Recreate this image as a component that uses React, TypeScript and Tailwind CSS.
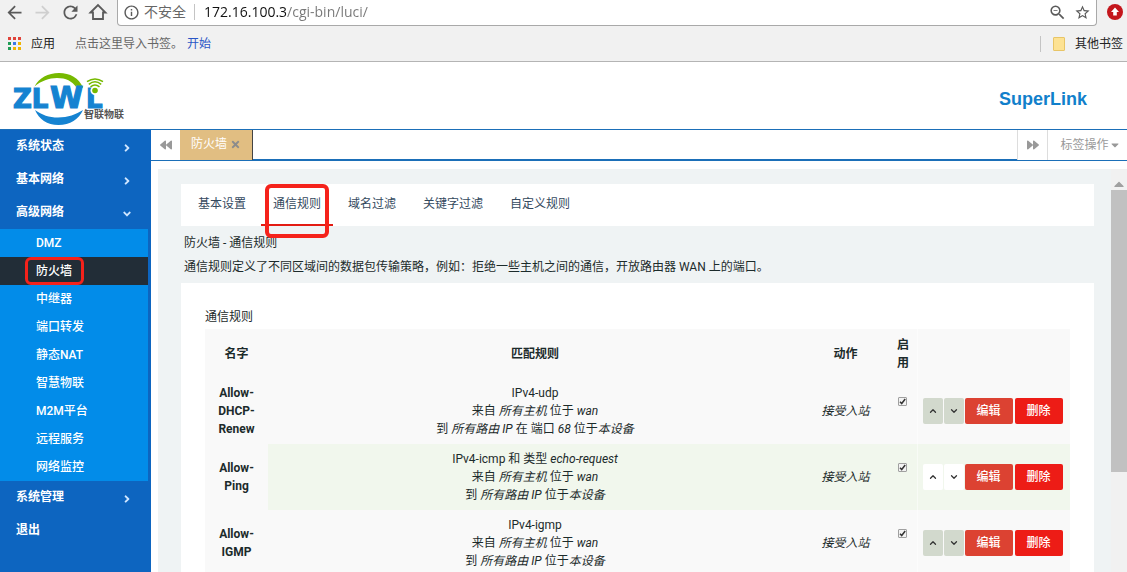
import type { ReactNode } from "react";
import clsx from "clsx";
import {
    FaAngleDown,
    FaAngleRight,
    FaBackward,
    FaCaretDown,
    FaCaretUp,
    FaForward,
    FaTimes,
} from "react-icons/fa";
import {
    MdArrowBack,
    MdArrowForward,
    MdInfoOutline,
    MdRefresh,
    MdStarBorder,
    MdZoomOut,
} from "react-icons/md";
import { ChevronDown, ChevronUp } from "lucide-react";

interface MenuItem {
    name: string;
    open?: boolean;
    arrow?: boolean;
    children?: string[];
}

interface Rule {
    name: string;
    match: ReactNode;
    source: ReactNode;
    target: ReactNode;
}

const menu: MenuItem[] = [
    { name: "系统状态", arrow: true },
    { name: "基本网络", arrow: true },
    {
        name: "高级网络",
        arrow: true,
        open: true,
        children: ["DMZ", "防火墙", "中继器", "端口转发", "静态NAT", "智慧物联", "M2M平台", "远程服务", "网络监控"],
    },
    { name: "系统管理", arrow: true },
    { name: "退出" },
];

const tabs = ["基本设置", "通信规则", "域名过滤", "关键字过滤", "自定义规则"];

const fromWan = <>来自 <i>所有主机</i> 位于 <i>wan</i></>;
const toDevice = <>到 <i>所有路由 IP</i> 位于<i>本设备</i></>;

const rules: Rule[] = [
    {
        name: "Allow-DHCP-Renew",
        match: "IPv4-udp",
        source: fromWan,
        target: <>到 <i>所有路由 IP</i> 在 端口 <i>68</i> 位于<i>本设备</i></>,
    },
    {
        name: "Allow-Ping",
        match: <>IPv4-icmp 和 类型 <i>echo-request</i></>,
        source: fromWan,
        target: toDevice,
    },
    { name: "Allow-IGMP", match: "IPv4-igmp", source: fromWan, target: toDevice },
];

const appDots = [
    "bg-[#e0443a]", "bg-[#e0443a]", "bg-[#e0443a]",
    "bg-[#1f9d55]", "bg-[#3b78e7]", "bg-[#f0b400]",
    "bg-[#1f9d55]", "bg-[#f0b400]", "bg-[#f0b400]",
];

function BrowserBar() {
    return (
        <div className="shrink-0 border-b border-[#b4b4b4] bg-[#f1f1f1] font-['Open_Sans','Noto_Sans_CJK_SC',sans-serif]">
            <div className="flex h-[26px] items-stretch">
                <div className="flex w-[117px] shrink-0 items-center gap-[7px] pb-[2px] pl-1 text-[21px] text-[#5a5a5a]">
                    <button aria-label="后退"><MdArrowBack /></button>
                    <button aria-label="前进" className="text-[#cfcfcf]"><MdArrowForward /></button>
                    <button aria-label="刷新"><MdRefresh /></button>
                    <button aria-label="主页">
                        <svg width="20" height="20" viewBox="0 0 20 20" fill="none" stroke="currentColor" strokeWidth="1.8">
                            <path d="M2.500 10.500 10 3l7.500 7.500H15V17H5v-6.500z" />
                        </svg>
                    </button>
                </div>
                <div className="flex min-w-0 flex-1 items-center rounded-b-sm border-x border-b border-[#a9a9a9] bg-white px-[5px] pb-px text-sm">
                    <MdInfoOutline className="shrink-0 text-[17px] text-[#5a5a5a]" />
                    <span className="ml-1 shrink-0 text-[#666]">不安全</span>
                    <span className="mx-2 h-4 w-px shrink-0 bg-[#c4c4c4]" />
                    <input
                        aria-label="地址"
                        defaultValue="172.16.100.3/cgi-bin/luci/"
                        className="min-w-0 flex-1 bg-[linear-gradient(90deg,#111_83px,#777_83px)] bg-clip-text pl-px text-transparent outline-none"
                    />
                    <button aria-label="缩小" className="text-[19px] text-[#5a5a5a]"><MdZoomOut /></button>
                    <button aria-label="收藏" className="ml-[7px] text-[17px] text-[#5a5a5a]"><MdStarBorder /></button>
                </div>
                <button aria-label="更新" className="flex w-[30px] shrink-0 items-center justify-end pr-1 pb-[2px]">
                    <svg width="16" height="16" viewBox="0 0 16 16">
                        <circle cx="8" cy="8" r="8" fill="#c4161c" />
                        <path d="M8 3.5 12 8H9.8v3.6H6.2V8H4z" fill="#fff" />
                    </svg>
                </button>
            </div>
            <div className="flex h-[35px] items-center px-2 text-xs">
                <a href="#apps" className="flex items-center gap-[10px] text-[#222]">
                    <span className="grid grid-cols-3 gap-[2px]">
                        {appDots.map((dot, index) => (
                            <span key={index} className={clsx("size-[3px]", dot)} />
                        ))}
                    </span>
                    应用
                </a>
                <span className="ml-5 text-[#666]">点击这里导入书签。</span>
                <a href="#import" className="ml-1 text-[#2a56c6]">开始</a>
                <span className="ml-auto h-4 w-px bg-[#c4c4c4]" />
                <a href="#other" className="ml-3 -mr-1 flex items-center gap-[10px] text-[#222]">
                    <span className="h-[14px] w-3 rounded-[1px] border border-[#e8c567] bg-[#fde293]" />
                    其他书签
                </a>
            </div>
        </div>
    );
}

function Logo() {
    return (
        <svg className="mt-[6px]" width="112" height="54" viewBox="13 72 112 54" role="img" aria-label="智联物联">
            <path d="M34.500 86.500C39 78 48 73 59 73c11 0 20 5 24 14.500h-6.500C72 81 66 78 57 78c-8 0-16 3-22.500 8.500z" fill="#76b900" />
            <path d="M35 110c7 5 14 7.500 23 7.500 10 0 18-3 25-7.500-4 9-13 15-24.500 15C47 125 39 119 35 110z" fill="#1583d1" />
            <g fontFamily="DejaVu Sans" fontWeight="bold" fill="#1583d1" stroke="#1583d1" strokeWidth="1.200">
                <text x="13" y="108" fontSize="26">ZL</text>
                <text x="50" y="108" fontSize="30">W</text>
                <text x="86" y="108" fontSize="26">L</text>
            </g>
            <circle cx="95" cy="90.500" r="4.500" fill="#fff" />
            <circle cx="95" cy="90.500" r="2.800" fill="#76b900" />
            <g fill="none" stroke="#76b900" strokeWidth="1.500">
                <path d="M90.500 86.800q4.500-3.600 9 0" />
                <path d="M88.800 84.300q6.200-5 12.400 0" />
                <path d="M87 81.700q8-5.500 16 0" />
            </g>
            <text x="84" y="118" fontFamily="Noto Sans CJK SC" fontWeight="bold" fontSize="10" fill="#555">智联物联</text>
        </svg>
    );
}

function Sidebar() {
    return (
        <nav className="w-[151px] shrink-0 bg-[#0d65c0] text-xs text-white">
            {menu.map((item) => (
                <div key={item.name}>
                    <a href="#menu" className="flex h-[33px] items-center justify-between pr-[18px] pb-[2px] pl-4 font-bold">
                        {item.name}
                        {item.arrow && (item.open ? <FaAngleDown className="mt-1 text-[#cfe6ff]" /> : <FaAngleRight className="mt-1 text-[#cfe6ff]" />)}
                    </a>
                    {item.children && (
                        <ul className="mr-[3px] bg-[#028ce9] font-medium">
                            {item.children.map((child) => (
                                <li key={child} className={clsx("relative", child === "防火墙" && "bg-[#222d37]")}>
                                    <a href="#page" className="flex h-7 items-center pl-9">{child}</a>
                                    {child === "防火墙" && (
                                        <span className="pointer-events-none absolute inset-y-0 left-[25px] w-[59px] rounded-md border-3 border-[#f5221b]" />
                                    )}
                                </li>
                            ))}
                        </ul>
                    )}
                </div>
            ))}
        </nav>
    );
}

function PageTabs() {
    return (
        <div className="flex h-[31px] shrink-0 border-b border-[#1b6fb8] text-xs text-[#999]">
            <button aria-label="向左" className="flex w-[29px] items-center justify-center"><FaBackward /></button>
            <div className="flex w-[73px] items-center justify-center gap-[3px] border-r border-[#444] bg-[#e1be82] pb-[2px] text-white">
                <a href="#firewall">防火墙</a>
                <button aria-label="关闭" className="text-[11px] text-[#8c8c8c]"><FaTimes /></button>
            </div>
            <div className="flex-1 border-b border-[#1b6fb8]" />
            <button aria-label="向右" className="flex w-[30px] items-center justify-center border-l border-[#ddd]"><FaForward /></button>
            <button className="flex w-20 items-center justify-center border-l border-[#ddd] pl-[6px]">
                标签操作<FaCaretDown />
            </button>
        </div>
    );
}

function SectionTabs() {
    return (
        <div className="flex gap-[3px] bg-white px-[5px] text-[#34495e]">
            {tabs.map((tab) => {
                const active = tab === "通信规则";
                return (
                    <a
                        key={tab}
                        href="#tab"
                        className={clsx("relative flex h-[42px] items-center border-b-2 px-3", active ? "border-[#e31b12]" : "border-transparent")}
                    >
                        {tab}
                        {active && (
                            <span className="pointer-events-none absolute top-0 left-1 h-[54px] w-16 rounded-md border-4 border-[#f5221b]" />
                        )}
                    </a>
                );
            })}
        </div>
    );
}

function RuleRow({ rule, even }: { rule: Rule; even: boolean }) {
    const arrow = clsx("flex h-[26px] w-5 items-center justify-center rounded-xs text-[#333]", even ? "bg-white" : "bg-[#d2d9cd]");
    return (
        <tr className={even ? "bg-[#f1f7ed]" : "bg-[#f9f9f9]"}>
            <th scope="row" className="bg-[#f9f9f9] px-[6px] py-[6px] font-bold">{rule.name}</th>
            <td className="py-[6px]">
                <p>{rule.match}</p>
                <p>{rule.source}</p>
                <p>{rule.target}</p>
            </td>
            <td><i>接受入站</i></td>
            <td>
                <label className="relative mx-auto mb-5 block size-[9px]">
                    <input
                        type="checkbox"
                        defaultChecked
                        aria-label={`启用 ${rule.name}`}
                        className="peer block size-[9px] appearance-none rounded-[1px] border border-[#a0a0a0] bg-[#f3f3f3]"
                    />
                    <svg viewBox="0 0 9 9" className="pointer-events-none absolute inset-0 hidden size-[9px] peer-checked:block" fill="none" stroke="#333" strokeWidth="1.500">
                        <path d="m2 4.700 1.700 1.800L7.200 2" />
                    </svg>
                </label>
            </td>
            <td className="border-l border-white/50">
                <div className="flex pl-[5px] text-white">
                    <button aria-label="上移" className={arrow}><ChevronUp size={10} strokeWidth={3} /></button>
                    <button aria-label="下移" className={clsx(arrow, "ml-px")}><ChevronDown size={10} strokeWidth={3} /></button>
                    <button className="ml-px h-[26px] w-12 rounded-xs bg-[#dc4232] font-medium">编辑</button>
                    <button className="ml-[2px] h-[26px] w-12 rounded-xs bg-[#ed1c16] font-medium">删除</button>
                </div>
            </td>
        </tr>
    );
}

function RuleTable() {
    return (
        <table className="w-full table-fixed text-center leading-[18px]">
            <colgroup>
                <col className="w-[63px]" />
                <col />
                <col className="w-[87px]" />
                <col className="w-7" />
                <col className="w-[153px]" />
            </colgroup>
            <thead>
                <tr className="h-[49px] bg-[#f9f9f9]">
                    <th>名字</th>
                    <th>匹配规则</th>
                    <th>动作</th>
                    <th className="px-2">启用</th>
                    <td className="border-l border-white/50" />
                </tr>
            </thead>
            <tbody>
                {rules.map((rule, index) => (
                    <RuleRow key={rule.name} rule={rule} even={index % 2 === 1} />
                ))}
            </tbody>
        </table>
    );
}

function ScrollBar() {
    return (
        <div className="w-4 shrink-0 bg-[#f1f1f1]">
            <button aria-label="向上滚动" className="flex h-[21px] w-full items-center justify-center text-base text-[#a0a0a0]">
                <FaCaretUp className="mt-2" />
            </button>
            <div className="h-[70%] bg-[#c1c1c1]" />
        </div>
    );
}

export default function App() {
    return (
        <div className="flex h-screen flex-col overflow-hidden bg-white font-[Roboto,'Noto_Sans_CJK_SC',sans-serif]">
            <BrowserBar />
            <header className="flex h-[68px] shrink-0 items-center justify-between border-b border-[#1b6fb8] pr-10 pl-[13px]">
                <Logo />
                <h1 className="mt-[6px] font-['Liberation_Sans',sans-serif] text-lg font-bold text-[#117fcb]">SuperLink</h1>
            </header>
            <div className="flex min-h-0 flex-1">
                <Sidebar />
                <div className="flex min-w-0 flex-1 flex-col">
                    <PageTabs />
                    <div className="flex min-h-0 flex-1 pt-2 pl-[7px]">
                        <main className="min-w-0 flex-1 overflow-hidden bg-[#eff3f4] pt-[15px] pr-[17px] pl-[23px] text-xs text-[#1c2b2b]">
                            <SectionTabs />
                            <div className="px-[3px] pt-[5px] pb-1 leading-6">
                                <h2>防火墙 - 通信规则</h2>
                                <p>通信规则定义了不同区域间的数据包传输策略，例如：拒绝一些主机之间的通信，开放路由器 WAN 上的端口。</p>
                            </div>
                            <section className="bg-white px-6 pt-[22px]">
                                <h3 className="leading-6">通信规则</h3>
                                <RuleTable />
                            </section>
                        </main>
                        <ScrollBar />
                    </div>
                </div>
            </div>
        </div>
    );
}
